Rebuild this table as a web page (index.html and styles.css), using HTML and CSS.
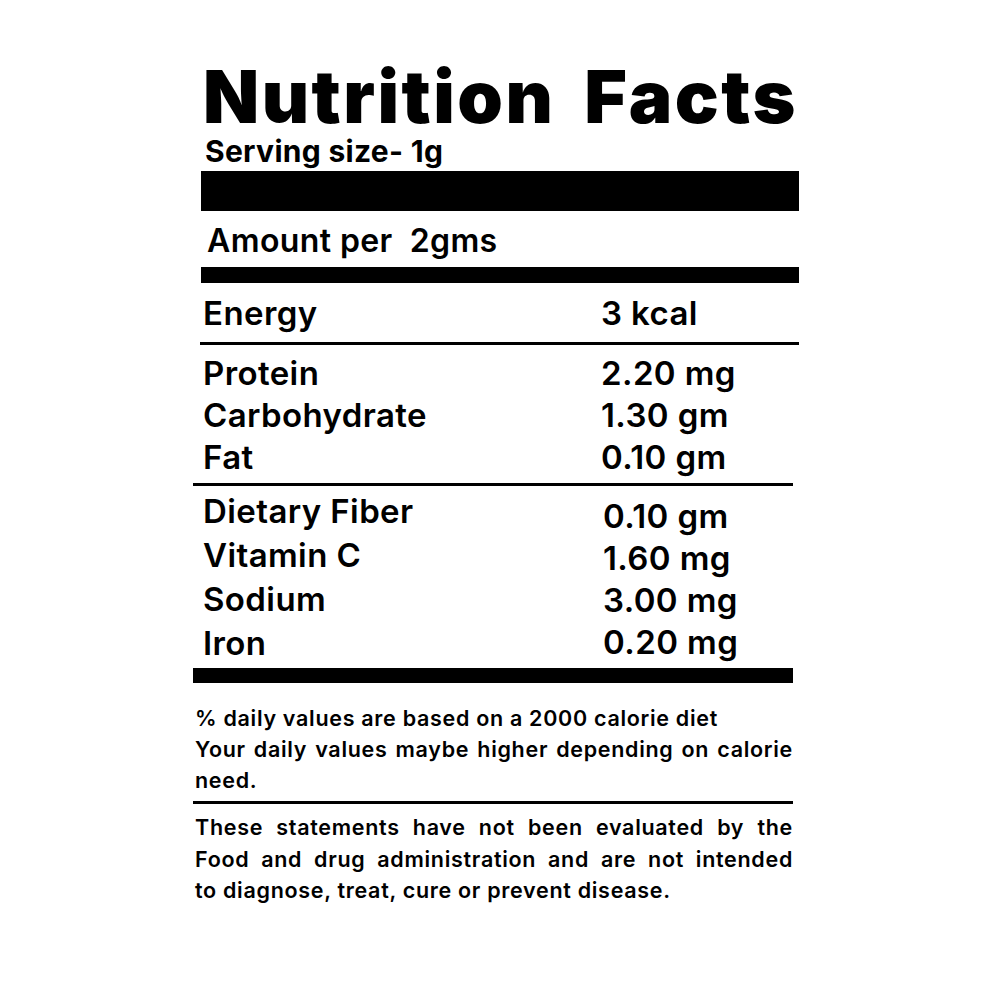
FILE: index.html
```html
<!DOCTYPE html>
<html lang="en">
<head>
<meta charset="utf-8">
<title>Nutrition Facts</title>
<link rel="stylesheet" href="styles.css">
</head>
<body>
<main class="label">
  <h1 class="title">Nutrition Facts</h1>
  <div class="serving">Serving size- 1g</div>
  <div class="bar bar-xl"></div>
  <div class="amount">Amount per&nbsp; 2gms</div>
  <div class="bar bar-md"></div>

  <div class="row row-energy"><span class="name">Energy</span><span class="val">3 kcal</span></div>
  <div class="rule rule-top"></div>

  <div class="group group-macro">
    <div class="row"><span class="name">Protein</span><span class="val">2.20 mg</span></div>
    <div class="row"><span class="name">Carbohydrate</span><span class="val">1.30 gm</span></div>
    <div class="row"><span class="name">Fat</span><span class="val">0.10 gm</span></div>
  </div>

  <section class="lower">
    <div class="rule rule-mid"></div>
    <div class="group group-micro">
      <div class="col-names">
        <div>Dietary Fiber</div>
        <div>Vitamin C</div>
        <div>Sodium</div>
        <div>Iron</div>
      </div>
      <div class="col-vals">
        <div>0.10 gm</div>
        <div>1.60 mg</div>
        <div>3.00 mg</div>
        <div>0.20 mg</div>
      </div>
    </div>
    <div class="bar bar-end"></div>

    <p class="note">
      <span class="line">% daily values are based on a 2000 calorie diet</span>
      <span class="line just">Your daily values maybe higher depending on calorie</span>
      <span class="line">need.</span>
    </p>
    <div class="rule rule-note"></div>
    <p class="disclaimer">
      <span class="line just">These statements have not been evaluated by the</span>
      <span class="line just">Food and drug administration and are not intended</span>
      <span class="line">to diagnose, treat, cure or prevent disease.</span>
    </p>
  </section>
</main>
</body>
</html>
```

FILE: styles.css
```css
* { box-sizing: border-box; }

html, body {
  margin: 0;
  padding: 0;
  background: #ffffff;
  color: #000000;
}

.label {
  width: 598px;
  margin-left: 201px;
  padding-top: 60px;
  display: flex;
  flex-direction: column;
}

.title {
  margin: 0;
  padding-left: 2px;
  font-family: "Inter", "Liberation Sans", sans-serif;
  font-weight: 900;
  font-size: 73px;
  line-height: 73px;
  letter-spacing: 2.5px;
  word-spacing: 12px;
  white-space: nowrap;
}

.serving {
  margin-top: 3px;
  padding-left: 4px;
  font-family: "Inter", "Liberation Sans", sans-serif;
  font-weight: 700;
  font-size: 30px;
  line-height: 30px;
  letter-spacing: 0.3px;
}

.bar { background: #000; }
.bar-xl { margin-top: 5px; height: 40px; }
.bar-md { margin-top: 10px; height: 16px; }

.amount {
  margin-top: 14px;
  padding-left: 6px;
  font-family: "Inter", "Liberation Sans", sans-serif;
  font-weight: 600;
  font-size: 32px;
  line-height: 32px;
  letter-spacing: 0.4px;
}

.row {
  display: grid;
  grid-template-columns: 398px auto;
  padding-left: 2px;
  font-family: "Inter", "Liberation Sans", sans-serif;
  font-weight: 600;
  font-size: 33px;
  line-height: 42px;
  letter-spacing: 0.4px;
}

.row-energy { margin-top: 9px; }

.rule { background: #000; height: 3px; }
.rule-top { margin-top: 8px; margin-left: -1px; }

.group-macro { margin-top: 7px; }

.lower {
  width: 600px;
  margin-left: -8px;
  display: flex;
  flex-direction: column;
}

.rule-mid { margin-top: 5px; }

.group-micro {
  margin-top: 3px;
  display: grid;
  grid-template-columns: 400px auto;
  padding-left: 10px;
  font-family: "Inter", "Liberation Sans", sans-serif;
  font-weight: 600;
  font-size: 33px;
  letter-spacing: 0.4px;
}

.col-names { line-height: 44px; }
.col-vals { line-height: 42px; padding-top: 6px; }

.bar-end { margin-top: 3px; height: 15px; }

.note,
.disclaimer {
  margin: 0;
  padding-left: 2px;
  font-family: "Inter", "Liberation Sans", sans-serif;
  font-weight: 600;
  font-size: 21.5px;
  letter-spacing: 0.7px;
}

.line { display: block; white-space: nowrap; }
.line.just { text-align: justify; text-align-last: justify; white-space: normal; }

.note { margin-top: 20px; line-height: 31px; }

.rule-note { margin-top: 5px; }

.disclaimer {
  margin-top: 8px;
  line-height: 31.5px;
}
```
